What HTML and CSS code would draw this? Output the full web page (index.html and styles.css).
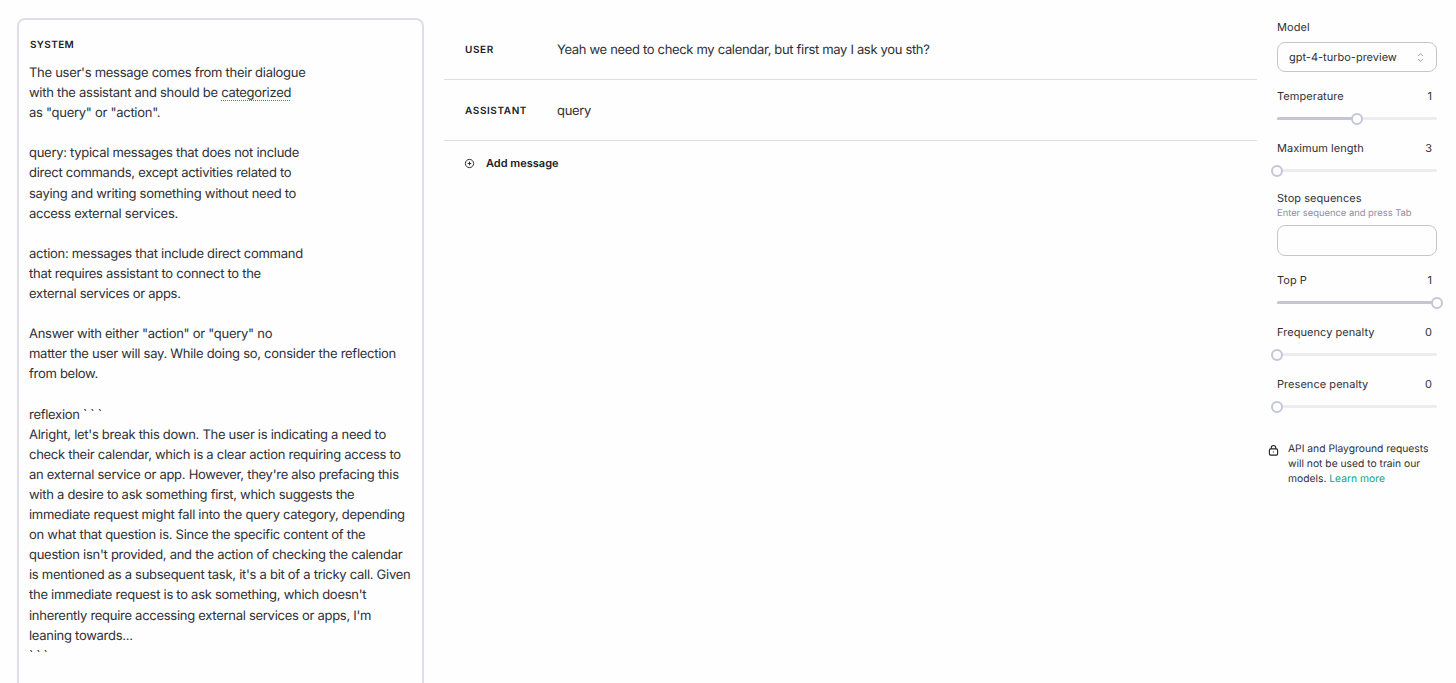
FILE: index.html
```html
<!DOCTYPE html>
<html lang="en">
<head>
<meta charset="utf-8">
<title>Playground</title>
<link rel="stylesheet" href="styles.css">
</head>
<body>
<div class="app">
  <section class="system">
    <div class="role role-system">SYSTEM</div>
    <div class="prompt">The user's message comes from their dialogue
with the assistant and should be <span class="misspelt">categorized</span>
as "query" or "action".

query: typical messages that does not include
direct commands, except activities related to
saying and writing something without need to
access external services.

action: messages that include direct command
that requires assistant to connect to the
external services or apps.

Answer with either "action" or "query" no
matter the user will say. While doing so, consider the reflection
from below.

reflexion ` ` `
Alright, let's break this down. The user is indicating a need to
check their calendar, which is a clear action requiring access to
an external service or app. However, they're also prefacing this
with a desire to ask something first, which suggests the
immediate request might fall into the query category, depending
on what that question is. Since the specific content of the
question isn't provided, and the action of checking the calendar
is mentioned as a subsequent task, it's a bit of a tricky call. Given
the immediate request is to ask something, which doesn't
inherently require accessing external services or apps, I'm
leaning towards...
` ` `</div>
  </section>

  <main class="messages">
    <div class="message">
      <div class="role">USER</div>
      <div class="content">Yeah we need to check my calendar, but first may I ask you sth?</div>
    </div>
    <div class="message">
      <div class="role">ASSISTANT</div>
      <div class="content">query</div>
    </div>
    <div class="add">
      <svg class="add-icon" viewBox="0 0 12 12" aria-hidden="true"><circle cx="6" cy="6" r="4.5"/><path d="M6 4v4M4 6h4"/></svg>
      <span>Add message</span>
    </div>
  </main>

  <aside class="panel">
    <div class="field field-model">
      <div class="label">Model</div>
      <div class="select">
        <span>gpt-4-turbo-preview</span>
        <svg class="chevrons" viewBox="0 0 8 12" aria-hidden="true"><path d="M1.2 4.3 4 1.6l2.8 2.7M1.2 7.7 4 10.4l2.8-2.7"/></svg>
      </div>
    </div>
    <div class="field field-slider">
      <div class="row"><span class="label">Temperature</span><span class="value">1</span></div>
      <div class="track"><div class="fill" style="width:50%"></div><div class="thumb" style="left:50%"></div></div>
    </div>
    <div class="field field-slider">
      <div class="row"><span class="label">Maximum length</span><span class="value">3</span></div>
      <div class="track"><div class="thumb" style="left:0%"></div></div>
    </div>
    <div class="field field-stop">
      <div class="label">Stop sequences</div>
      <div class="hint">Enter sequence and press Tab</div>
      <div class="input"></div>
    </div>
    <div class="field field-slider">
      <div class="row"><span class="label">Top P</span><span class="value">1</span></div>
      <div class="track"><div class="fill" style="width:100%"></div><div class="thumb" style="left:100%"></div></div>
    </div>
    <div class="field field-slider">
      <div class="row"><span class="label">Frequency penalty</span><span class="value">0</span></div>
      <div class="track"><div class="thumb" style="left:0%"></div></div>
    </div>
    <div class="field field-slider">
      <div class="row"><span class="label">Presence penalty</span><span class="value">0</span></div>
      <div class="track"><div class="thumb" style="left:0%"></div></div>
    </div>
    <div class="notice">
      <svg class="lock" viewBox="0 0 12 12" aria-hidden="true"><rect x="1.5" y="4.2" width="9" height="6.8" rx="1.4"/><path d="M3.6 4.2V3a2.4 2.4 0 0 1 4.8 0v1.2M6 7v1.2"/></svg>
      <p>API and Playground requests will not be used to train our models. <a href="#">Learn more</a></p>
    </div>
  </aside>
</div>
</body>
</html>
```
FILE: styles.css
```css
* { box-sizing: border-box; }
html, body { margin: 0; height: 100%; overflow: hidden; background: #fefefe; }
body {
  font-family: Inter, "Liberation Sans", sans-serif;
  color: #202123;
  text-rendering: geometricPrecision;
}

.app {
  display: grid;
  grid-template-columns: 407px 813px 160px;
  column-gap: 20px;
  padding: 18px 0 0 17px;
  height: 683px;
  overflow: hidden;
}

.system {
  height: 680px;
  border: 2px solid #dedee6;
  border-radius: 8px;
  padding: 18px 10px 0 11px;
}
.role {
  font-size: 10px;
  font-weight: 600;
  letter-spacing: 0.6px;
  line-height: 14px;
  color: #202123;
}
.role-system { margin-bottom: 11px; letter-spacing: 0.35px; }
.prompt {
  white-space: pre;
  font-size: 13px;
  letter-spacing: -0.28px;
  line-height: 20.1px;
  color: #2f3037;
  margin-left: -1px;
}
.misspelt {
  background-image: repeating-linear-gradient(90deg, #f0383b 0 1px, transparent 1px 2px);
  background-repeat: no-repeat;
  background-position: left bottom;
  background-size: 100% 1px;
}

.messages { display: flex; flex-direction: column; }
.message {
  display: grid;
  grid-template-columns: 92px 1fr;
  padding: 2px 21px 0;
  height: 61px;
  border-bottom: 1px solid #dedee6;
  align-items: center;
}
.message:first-child { height: 62px; }
.content { font-size: 13px; letter-spacing: -0.33px; color: #2f3037; line-height: 20px; }
.add {
  display: flex;
  align-items: center;
  gap: 11px;
  padding: 13px 20px;
  font-size: 11px;
  font-weight: 600;
  line-height: 18px;
  color: #202123;
}
.add-icon { width: 11px; height: 11px; fill: none; stroke: #202123; stroke-width: 1; flex: none; }

.panel { display: flex; flex-direction: column; margin-top: -18px; padding-top: 19px; }
.label { font-size: 11px; letter-spacing: 0.05px; line-height: 16px; color: #2f3037; }
.value { font-size: 11px; line-height: 16px; color: #2f3037; padding-right: 5px; }
.row { display: flex; justify-content: space-between; }

.select {
  margin-top: 7px;
  height: 30px;
  border: 1px solid #c5c5d2;
  border-radius: 8px;
  display: flex;
  align-items: center;
  justify-content: space-between;
  padding: 0 12px 0 11px;
  font-size: 11px;
  color: #2f3037;
}
.chevrons { width: 7px; height: 11px; fill: none; stroke: #8e8ea0; stroke-width: 1; }

.field-slider { margin-top: 10px; }
.field-model + .field-slider { margin-top: 16px; }
.track {
  position: relative;
  margin-top: 13px;
  margin-bottom: 10px;
  height: 3px;
  border-radius: 2px;
  background: #ececf1;
}
.fill { height: 100%; border-radius: 2px; background: #c5c5d2; }
.thumb {
  position: absolute;
  top: 50%;
  width: 12px;
  height: 12px;
  margin: -6px 0 0 -6px;
  border: 2px solid #c5c5d8;
  border-radius: 50%;
  background: #fff;
}
.field-stop { margin-top: 8px; }
.hint { margin-top: 1px; font-size: 9.4px; line-height: 13px; color: #8e8ea0; }
.input {
  margin-top: 5px;
  height: 31px;
  border: 1px solid #c5c5d2;
  border-radius: 8px;
}
.field-stop + .field-slider { margin-top: 16px; }

.notice {
  display: flex;
  gap: 9px;
  margin: 24px 0 0 -9px;
  width: 170px;
}
.lock { width: 11px; height: 11px; margin-top: 3px; fill: none; stroke: #202123; stroke-width: 1.2; flex: none; }
.notice p { margin: 0; font-size: 10.3px; line-height: 15px; color: #2f3037; }
.notice a { color: #10a37f; text-decoration: none; }
```
